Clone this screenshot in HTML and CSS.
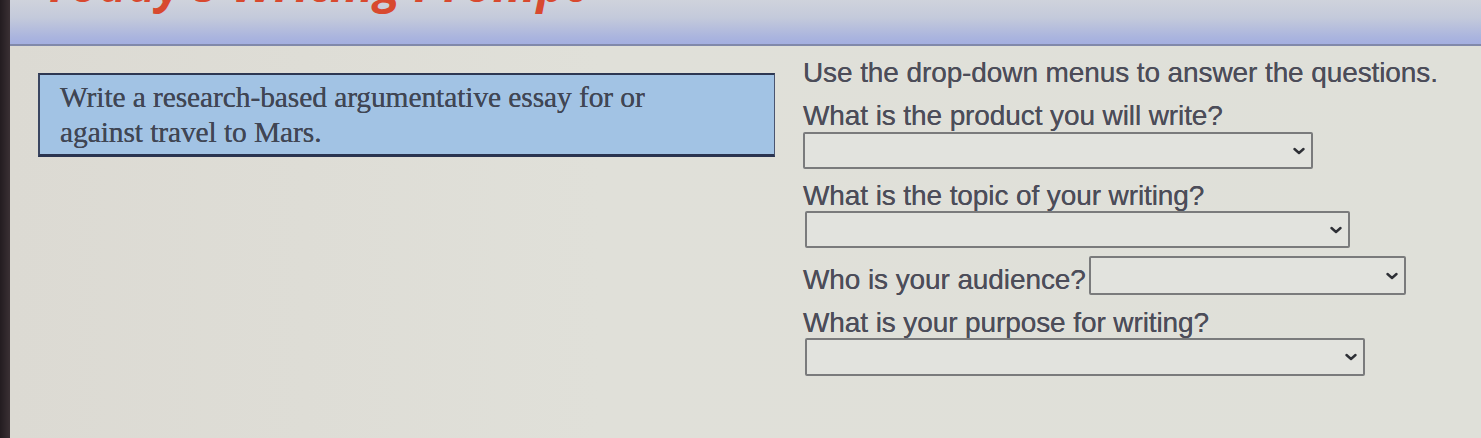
FILE: index.html
```html
<!DOCTYPE html>
<html lang="en">
<head>
<meta charset="utf-8">
<title>Today's Writing Prompt</title>
<link rel="stylesheet" href="styles.css">
</head>
<body>
<div class="page">
  <div class="bezel"></div>
  <div class="screen">
    <header class="header">
      <h1 class="title">Today's Writing Prompt</h1>
    </header>
    <main class="main">
      <section class="prompt">
        <p>Write a research-based argumentative essay for or against travel to Mars.</p>
      </section>
      <section class="questions">
        <p class="q intro">Use the drop-down menus to answer the questions.</p>
        <p class="q q1">What is the product you will write?</p>
        <div class="dd dd1"><svg class="chev" viewBox="0 0 12 8" width="12" height="8"><polyline points="1.5,2 6,6 10.5,2" /></svg></div>
        <p class="q q2">What is the topic of your writing?</p>
        <div class="dd dd2"><svg class="chev" viewBox="0 0 12 8" width="12" height="8"><polyline points="1.5,2 6,6 10.5,2" /></svg></div>
        <div class="row">
          <p class="q">Who is your audience?</p>
          <div class="dd dd3"><svg class="chev" viewBox="0 0 12 8" width="12" height="8"><polyline points="1.5,2 6,6 10.5,2" /></svg></div>
        </div>
        <p class="q q4">What is your purpose for writing?</p>
        <div class="dd dd4"><svg class="chev" viewBox="0 0 12 8" width="12" height="8"><polyline points="1.5,2 6,6 10.5,2" /></svg></div>
      </section>
    </main>
  </div>
</div>
</body>
</html>
```
FILE: styles.css
```css
html, body {
  margin: 0;
  padding: 0;
  height: 100%;
}
body {
  background: #dedfd8;
  overflow: hidden;
}
.page {
  display: flex;
  width: 1481px;
  height: 438px;
}
.bezel {
  width: 10px;
  flex: none;
  background: linear-gradient(90deg, #231c20, #3a3034);
}
.screen {
  flex: 1;
  display: flex;
  flex-direction: column;
  background: linear-gradient(90deg, #dcdad3 0%, #e0e0d9 40%, #dfe0d9 100%);
}
.header {
  height: 44px;
  flex: none;
  overflow: hidden;
  border-bottom: 2px solid #8189aa;
  background: linear-gradient(180deg, #cfd3dc 0%, #c4cadb 40%, #aab4de 85%, #a4afe0 100%);
}
.title {
  margin: -42px 0 0 34px;
  font-family: "Open Sans", "DejaVu Sans", sans-serif;
  font-style: italic;
  font-weight: 700;
  font-size: 48px;
  line-height: 52px;
  color: #d8492f;
  letter-spacing: 0.5px;
  white-space: nowrap;
}
.main {
  display: flex;
  align-items: flex-start;
}
.prompt {
  margin: 27px 0 0 28px;
  width: 734px;
  height: 79px;
  box-sizing: content-box;
  background: #a2c3e4;
  border-top: 2px solid #2d3752;
  border-left: 2px solid #3a4560;
  border-right: 1px solid #4a5570;
  border-bottom: 3px solid #2a3450;
}
.prompt p {
  margin: 5px 0 0 20px;
  width: 640px;
  font-family: "Liberation Serif", "Times New Roman", serif;
  font-size: 29.5px;
  line-height: 35px;
  color: #404654;
  letter-spacing: -0.1px;
  text-shadow: 0 0 0.6px #404654;
}
.questions {
  margin-left: 28px;
  padding-top: 12px;
  display: flex;
  flex-direction: column;
  align-items: flex-start;
}
.q {
  margin: 0;
  font-family: "Liberation Sans", Arial, sans-serif;
  font-size: 28px;
  line-height: 30px;
  color: #4c4d59;
  letter-spacing: -0.1px;
  white-space: nowrap;
  text-shadow: 0 0 0.6px #4c4d59;
}
.q1 { margin-top: 13px; }
.q2 { margin-top: 12px; }
.q4 { margin-top: 13px; }
.dd {
  height: 37px;
  box-sizing: border-box;
  border: 2px solid #7a7b7c;
  border-radius: 2px;
  background: #e2e3de;
  display: flex;
  align-items: center;
  justify-content: flex-end;
  padding-right: 6px;
}
.dd1 { width: 510px; margin-top: 1px; }
.dd2 { width: 545px; margin-left: 2px; }
.dd3 { width: 317px; height: 39px; margin-left: 3px; }
.dd4 { width: 560px; margin-left: 2px; height: 38px; }
.row {
  margin-top: 8px;
  display: flex;
  align-items: flex-end;
}
.chev {
  fill: none;
  stroke: #2e3036;
  stroke-width: 2.4;
  stroke-linecap: round;
  stroke-linejoin: round;
}
```
